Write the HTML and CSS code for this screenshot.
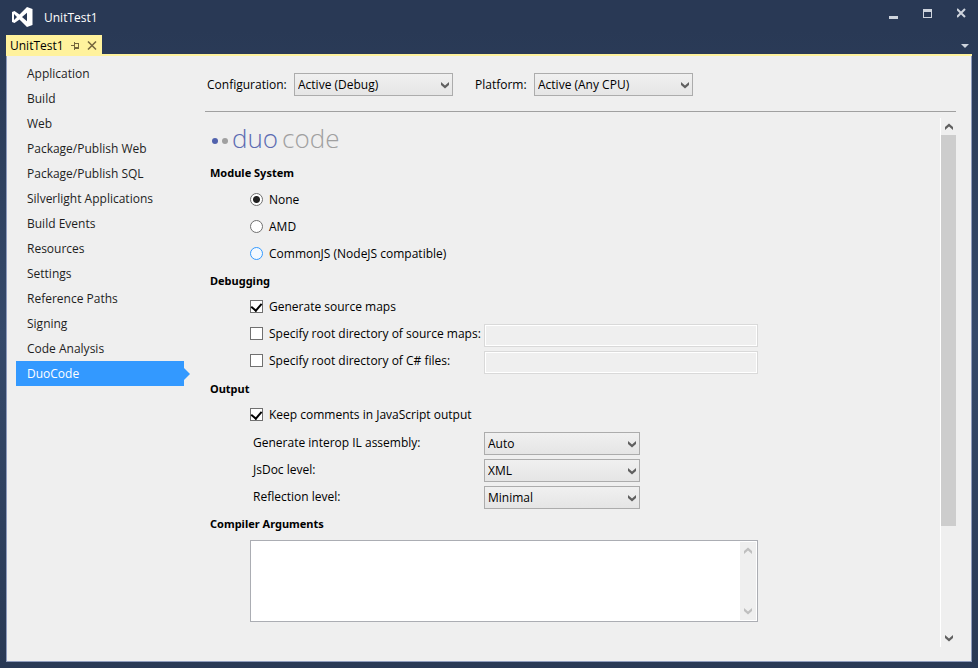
FILE: index.html
```html
<!DOCTYPE html>
<html lang="en">
<head>
<meta charset="utf-8">
<title>UnitTest1</title>
<link rel="stylesheet" href="styles.css">
</head>
<body>
<svg class="defs" aria-hidden="true">
  <symbol id="down" viewBox="0 0 8 7"><path d="M0 0 L4 3.500 L8 0 V3 L4 6.500 L0 3 Z"/></symbol>
  <symbol id="up" viewBox="0 0 8 7"><path d="M0 7 L4 3.500 L8 7 V4 L4 0.500 L0 4 Z"/></symbol>
</svg>
<div class="window">
  <header class="titlebar">
    <svg class="logo" viewBox="0 0 21 20" aria-hidden="true"><path fill="#fff" fill-rule="evenodd" d="M15 0 L20.500 2 V18 L15 20 L7.500 12.500 L2.500 16 L0 15 V5 L2.500 4 L7.500 7.500 Z M2 7 V13 L5 10 Z M15 5.800 L10 10 L15 14.200 Z"/></svg>
    <h1 class="title">UnitTest1</h1>
    <div class="window-buttons">
      <button aria-label="Minimize"><svg width="9" height="14" viewBox="0 0 9 14"><path fill="#ced4dd" d="M0 10h9v3H0z"/></svg></button>
      <button aria-label="Maximize"><svg width="9" height="14" viewBox="0 0 9 14"><path fill="#ced4dd" fill-rule="evenodd" d="M0 3h9v9H0zM1 6v5h7V6z"/></svg></button>
      <button aria-label="Close"><svg width="10" height="14" viewBox="0 0 10 14"><path stroke="#ced4dd" stroke-width="2" d="M0 3l8 8M8 3l-8 8"/></svg></button>
    </div>
  </header>
  <div class="tabs">
    <div class="tab">
      <span>UnitTest1</span>
      <button aria-label="Pin"><svg width="9" height="9" viewBox="0 0 9 9"><path fill="#75663d" fill-rule="evenodd" d="M0 4h3V1h1v1h4v6H4v1H3V5H0zM4 3v3h3V3z"/></svg></button>
      <button aria-label="Close tab"><svg width="10" height="9" viewBox="0 0 10 9"><path stroke="#75663d" stroke-width="1.500" d="M1 0.500l8 8M9 0.500l-8 8"/></svg></button>
    </div>
    <button class="tab-menu" aria-label="Open documents"><svg width="8" height="4" viewBox="0 0 8 4"><path fill="#ced4dd" d="M0 0h8L4 4z"/></svg></button>
  </div>
  <div class="document">
    <nav class="nav">
      <a href="#">Application</a>
      <a href="#">Build</a>
      <a href="#">Web</a>
      <a href="#">Package/Publish Web</a>
      <a href="#">Package/Publish SQL</a>
      <a href="#">Silverlight Applications</a>
      <a href="#">Build Events</a>
      <a href="#">Resources</a>
      <a href="#">Settings</a>
      <a href="#">Reference Paths</a>
      <a href="#">Signing</a>
      <a href="#">Code Analysis</a>
      <a href="#" class="active" aria-current="page">DuoCode</a>
    </nav>
    <main class="main">
      <div class="toolbar">
        <label for="configuration">Configuration:</label>
        <div class="combo"><select id="configuration"><option>Active (Debug)</option></select><svg class="arrow"><use href="#down"/></svg></div>
        <label class="platform" for="platform">Platform:</label>
        <div class="combo"><select id="platform"><option>Active (Any CPU)</option></select><svg class="arrow"><use href="#down"/></svg></div>
      </div>
      <div class="pane">
        <form class="form">
          <div class="brand"><i class="dot"></i><i class="dot grey"></i><span class="duo">duo</span><span class="code">code</span></div>

          <h2>Module System</h2>
          <div class="row radio"><input type="radio" name="module" id="none" checked><label for="none">None</label></div>
          <div class="row radio"><input type="radio" name="module" id="amd"><label for="amd">AMD</label></div>
          <div class="row radio"><input type="radio" name="module" id="commonjs" class="hot"><label for="commonjs">CommonJS (NodeJS compatible)</label></div>

          <h2>Debugging</h2>
          <div class="row"><div class="field"><input type="checkbox" id="maps" checked><label for="maps">Generate source maps</label></div></div>
          <div class="row"><div class="field"><input type="checkbox" id="maproot"><label for="maproot">Specify root directory of source maps:</label></div><input class="text" type="text" aria-label="Root directory of source maps" disabled></div>
          <div class="row"><div class="field"><input type="checkbox" id="csroot"><label for="csroot">Specify root directory of C# files:</label></div><input class="text" type="text" aria-label="Root directory of C# files" disabled></div>

          <h2>Output</h2>
          <div class="row"><div class="field"><input type="checkbox" id="comments" checked><label for="comments">Keep comments in JavaScript output</label></div></div>
          <div class="row"><div class="field plain"><label for="interop">Generate interop IL assembly:</label></div><div class="combo"><select id="interop"><option>Auto</option></select><svg class="arrow"><use href="#down"/></svg></div></div>
          <div class="row"><div class="field plain"><label for="jsdoc">JsDoc level:</label></div><div class="combo"><select id="jsdoc"><option>XML</option></select><svg class="arrow"><use href="#down"/></svg></div></div>
          <div class="row"><div class="field plain"><label for="reflection">Reflection level:</label></div><div class="combo"><select id="reflection"><option>Minimal</option></select><svg class="arrow"><use href="#down"/></svg></div></div>

          <h2><label for="arguments">Compiler Arguments</label></h2>
          <div class="arguments">
            <textarea id="arguments"></textarea>
            <div class="scroll small"><button type="button" aria-label="Scroll text up"><svg><use href="#up"/></svg></button><button type="button" aria-label="Scroll text down"><svg><use href="#down"/></svg></button></div>
          </div>
        </form>
        <div class="scroll">
          <button type="button" aria-label="Scroll up"><svg><use href="#up"/></svg></button>
          <div class="track"><div class="thumb"></div></div>
          <button type="button" aria-label="Scroll down"><svg><use href="#down"/></svg></button>
        </div>
      </div>
    </main>
  </div>
</div>
</body>
</html>
```
FILE: styles.css
```css
* { box-sizing: border-box; }
body {
  margin: 0;
  font: 12px/16px "Open Sans", "Noto Sans", sans-serif;
  color: #000;
}
button { display: flex; padding: 0; border: 0; background: none; }
.defs { position: absolute; width: 0; height: 0; }

.window {
  display: flex;
  flex-direction: column;
  min-height: 100vh;
  padding: 0 6px 6px;
  background: linear-gradient(#293955, #293955 30px, #35496a 50%, #293955);
}
.titlebar {
  display: flex;
  align-items: center;
  height: 35px;
  padding: 0 5px 0 6px;
}
.logo { width: 21px; height: 20px; margin-bottom: 2px; }
.title { margin: 0 0 0 11px; font-size: 12px; font-weight: 400; color: #fff; }
.window-buttons { display: flex; gap: 25px; margin: 0 0 9px auto; }

.tabs {
  display: flex;
  justify-content: space-between;
  align-items: center;
  border-bottom: 2px solid #fff29d;
}
.tab {
  display: flex;
  align-items: center;
  gap: 7px;
  height: 19px;
  padding: 2px 5px 0 4px;
  background: #fff29d;
}
.tab-menu { padding: 2px 3px 0; }

.document {
  flex: 1;
  display: flex;
  border: 1px solid #8e9bbc;
  border-top: 0;
  background: #efefef;
}
.nav { width: 177px; padding: 5px 0 0 9px; }
.nav a {
  display: block;
  padding: 5px 11px 4px;
  color: #1e1e1e;
  text-decoration: none;
}
.nav .active { position: relative; background: #3399ff; color: #fff; }
.nav .active::after {
  content: "";
  position: absolute;
  left: 100%;
  top: 7px;
  border: 6px solid transparent;
  border-left-color: #3399ff;
  border-right: 0;
}

.main {
  flex: 1;
  display: flex;
  flex-direction: column;
  margin: 0 15px 14px 21px;
}
.toolbar {
  display: flex;
  align-items: center;
  height: 56px;
  padding: 2px 2px 0;
  border-bottom: 1px solid #a0a0a0;
}
.toolbar label { width: 87px; }
.toolbar .platform { width: 59px; margin-left: 22px; }
.toolbar .combo { width: 159px; }

.combo { position: relative; width: 156px; }
.combo select {
  appearance: none;
  display: block;
  width: 100%;
  height: 23px;
  padding: 0 20px 0 3px;
  border: 1px solid #acacac;
  border-radius: 0;
  background: linear-gradient(#f0f0f0, #e5e5e5);
  font: inherit;
  color: #000;
}
.arrow {
  position: absolute;
  top: 9px;
  right: 4px;
  width: 8px;
  height: 7px;
  fill: #606060;
  pointer-events: none;
}

.pane { flex: 1; display: flex; margin-top: 6px; }
.form { flex: 1; padding: 0 5px; }
.brand {
  display: flex;
  align-items: center;
  height: 42px;
  padding: 0 0 2px 2px;
  font: 300 26px/40px "Open Sans", sans-serif;
}
.dot { width: 6px; height: 6px; margin: 5px 4px 0 0; border-radius: 50%; background: #5162ad; }
.dot.grey { background: #a0a0a0; }
.duo { color: #5c6bb2; }
.code { margin-left: 4px; color: #a0a0a0; }

h2 { margin: 0; padding-bottom: 2px; font: bold 11px/25px "Noto Sans", "Open Sans", sans-serif; }
.row { display: flex; align-items: center; height: 27px; padding-left: 40px; }
.row.radio { padding-bottom: 2px; }
.field { display: flex; align-items: center; width: 234px; padding-bottom: 4px; }
.field.plain { padding: 0 0 2px 3px; }
.row label { margin-left: 6px; white-space: nowrap; }
.field.plain label { margin-left: 0; }

input[type="radio"],
input[type="checkbox"] {
  appearance: none;
  flex: none;
  width: 13px;
  height: 13px;
  margin: 0;
  border: 1px solid #707070;
  background: #fff;
}
input[type="radio"] { border-radius: 50%; }
input[type="radio"]:checked { background: radial-gradient(circle, #212121 3px, #fff 4px); }
input[type="radio"].hot { border-color: #3399ff; background: #f3f9ff; }
input[type="checkbox"] { display: flex; align-items: flex-start; justify-content: center; }
input[type="checkbox"]:checked::after {
  content: "";
  width: 5px;
  height: 8px;
  border: solid #000;
  border-width: 0 2px 2px 0;
  transform: rotate(40deg);
}
.text {
  width: 274px;
  height: 23px;
  padding: 0 3px;
  border: 1px solid #d9d9d9;
  background: #efefef;
  box-shadow: inset 0 0 0 1px #fff;
  font: inherit;
}
.arguments {
  display: flex;
  width: 508px;
  height: 82px;
  margin: 2px 0 0 40px;
  padding: 1px;
  border: 1px solid #abadb3;
  background: #fff;
}
textarea { flex: 1; resize: none; border: 0; padding: 2px; font: inherit; outline: 0; }

.scroll { display: flex; flex-direction: column; width: 16px; border-left: 1px solid #fff; }
.scroll button { align-items: center; justify-content: center; height: 17px; }
.scroll svg { width: 8px; height: 7px; fill: #606060; }
.track { flex: 1; }
.thumb { height: 79%; background: #cdcdcd; }
.scroll.small { justify-content: space-between; border: 0; background: #efefef; }
.scroll.small svg { fill: #bfbfbf; }
```
